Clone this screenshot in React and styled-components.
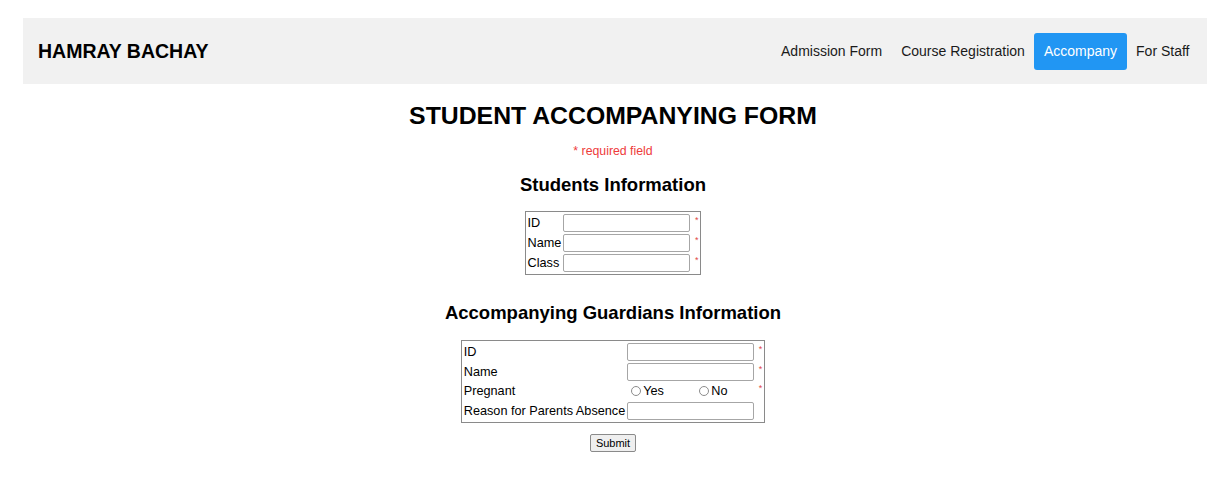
import React from "react";
import styled, { createGlobalStyle } from "styled-components";

const Global = createGlobalStyle`
  html, body { margin: 0; padding: 0; background: #fff; }
  body { font-family: "Liberation Sans", Arial, sans-serif; color: #000; }
  * { box-sizing: border-box; }
`;

const Page = styled.div`
  padding: 18px 23px 0;
  display: flex;
  flex-direction: column;
`;

const Header = styled.header`
  height: 66px;
  background: #f1f1f1;
  display: flex;
  align-items: center;
  justify-content: space-between;
  padding: 0 8px 0 15px;
`;

const Brand = styled.div`
  font-size: 19.5px;
  font-weight: bold;
  color: #000;
`;

const Nav = styled.nav`
  display: flex;
  align-items: center;
`;

const NavLink = styled.a`
  display: block;
  font-size: 14px;
  line-height: 36px;
  height: 37px;
  padding: 0 9.5px;
  border-radius: 3px;
  text-decoration: none;
  color: ${(p) => (p.$active ? "#fff" : "#1a1a1a")};
  background: ${(p) => (p.$active ? "#2196F3" : "transparent")};
`;

const Main = styled.main`
  display: flex;
  flex-direction: column;
  align-items: center;
  padding-right: 4px;
`;

const Title = styled.h1`
  margin: 18px 0 0;
  font-size: 24.8px;
  line-height: 28px;
  font-weight: bold;
`;

const Required = styled.p`
  margin: 14px 0 0;
  font-size: 12.3px;
  line-height: 15px;
  color: #ee3b3b;
`;

const SectionTitle = styled.h2`
  margin: ${(p) => p.$mt}px 0 0;
  font-size: 18.5px;
  line-height: 22px;
  font-weight: bold;
`;

const FormTable = styled.div`
  margin-top: ${(p) => p.$mt}px;
  display: grid;
  grid-template-columns: auto 127px 6px;
  grid-auto-rows: 18px;
  column-gap: 2px;
  row-gap: ${(p) => p.$rowGap}px;
  padding: 2px;
  border: 1px solid #8a8a8a;
  font-size: 12.7px;
`;

const Label = styled.label`
  line-height: 18px;
  white-space: nowrap;
`;

const TextInput = styled.input`
  width: 100%;
  height: 18px;
  border: 1px solid #a6a6a6;
  border-radius: 2px;
  padding: 0 2px;
  font: inherit;
  background: #fff;
`;

const Star = styled.span`
  color: #e04848;
  font-size: 9px;
  line-height: 12px;
  text-align: right;
`;

const RadioGroup = styled.div`
  display: flex;
  align-items: center;
  padding-left: 4px;
`;

const RadioOption = styled.label`
  display: flex;
  align-items: center;
  gap: 2px;
  width: ${(p) => p.$w}px;
  line-height: 18px;
`;

const Radio = styled.input.attrs({ type: "radio" })`
  appearance: none;
  margin: 0;
  width: 10px;
  height: 10px;
  border: 1px solid #8c8c8c;
  border-radius: 50%;
  background: #fff;
`;

const SubmitButton = styled.button`
  margin-top: 11px;
  height: 18px;
  padding: 0 5px;
  font-family: "Liberation Sans", Arial, sans-serif;
  font-size: 11px;
  background: #efefef;
  border: 1px solid #8a8a8a;
  border-radius: 2px;
  color: #000;
`;

export default function App() {
  return (
    <>
      <Global />
      <Page>
        <Header>
          <Brand>HAMRAY BACHAY</Brand>
          <Nav>
            <NavLink href="#">Admission Form</NavLink>
            <NavLink href="#">Course Registration</NavLink>
            <NavLink href="#" $active>Accompany</NavLink>
            <NavLink href="#">For Staff</NavLink>
          </Nav>
        </Header>

        <Main>
          <Title>STUDENT ACCOMPANYING FORM</Title>
          <Required>* required field</Required>

          <SectionTitle $mt={15}>Students Information</SectionTitle>
          <FormTable $mt={15} $rowGap={2}>
            <Label>ID</Label>
            <TextInput />
            <Star>*</Star>
            <Label>Name</Label>
            <TextInput />
            <Star>*</Star>
            <Label>Class</Label>
            <TextInput />
            <Star>*</Star>
          </FormTable>

          <SectionTitle $mt={27}>Accompanying Guardians Information</SectionTitle>
          <FormTable $mt={16} $rowGap={1.5}>
            <Label>ID</Label>
            <TextInput />
            <Star>*</Star>
            <Label>Name</Label>
            <TextInput />
            <Star>*</Star>
            <Label>Pregnant</Label>
            <RadioGroup>
              <RadioOption $w={68}>
                <Radio name="pregnant" />
                Yes
              </RadioOption>
              <RadioOption $w={50}>
                <Radio name="pregnant" />
                No
              </RadioOption>
            </RadioGroup>
            <Star>*</Star>
            <Label>Reason for Parents Absence</Label>
            <TextInput />
            <span />
          </FormTable>

          <SubmitButton type="button">Submit</SubmitButton>
        </Main>
      </Page>
    </>
  );
}
